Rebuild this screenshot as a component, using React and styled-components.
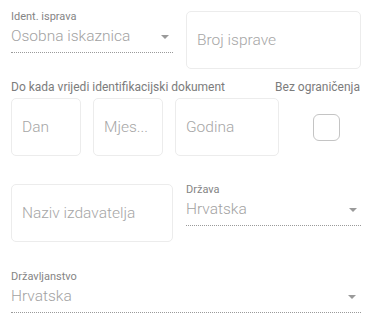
import React from "react";
import styled, { createGlobalStyle } from "styled-components";

const GlobalStyle = createGlobalStyle`
  body {
    margin: 0;
    background: #ffffff;
    font-family: Roboto, "Liberation Sans", sans-serif;
  }
`;

const Form = styled.div`
  width: 371px;
  box-sizing: border-box;
  padding: 11px 10px 0 11px;
`;

const Row = styled.div`
  display: grid;
  grid-template-columns: ${props => props.columns};
  column-gap: ${props => props.gap || "13px"};
  align-items: start;
  margin-top: ${props => props.top || "0"};
`;

const Select = styled.div`
  display: flex;
  flex-direction: column;
  border-bottom: 1px dotted #9a9a9a;
  padding-bottom: 5px;
`;

const Label = styled.span`
  font-size: 11px;
  line-height: 12px;
  color: #858585;
  white-space: nowrap;
`;

const ValueRow = styled.div`
  display: flex;
  align-items: center;
  justify-content: space-between;
  margin-top: 2px;
  font-size: 15.5px;
  line-height: 22px;
  font-weight: 300;
  color: #a2a2a2;
  padding-right: ${props => props.pr || "4px"};
`;

const Caret = styled.span`
  width: 0;
  height: 0;
  margin-top: 2px;
  border-left: 4.5px solid transparent;
  border-right: 4.5px solid transparent;
  border-top: 4px solid #9a9a9a;
`;

const Field = styled.div`
  height: 58px;
  box-sizing: border-box;
  border: 1px solid #ececec;
  border-radius: 5px;
  display: flex;
  align-items: center;
  padding-left: 10px;
  font-size: 15.5px;
  font-weight: 300;
  color: #a6a6a6;
  white-space: nowrap;
  overflow: hidden;
`;

const DateLabels = styled.div`
  display: flex;
  justify-content: space-between;
  margin-top: 11px;
  padding-right: 1px;
`;

const DateLabel = styled.span`
  font-size: 12px;
  line-height: 14px;
  color: #7c7c7c;
  white-space: nowrap;
`;

const CheckCell = styled.div`
  display: flex;
  justify-content: center;
  align-items: center;
  height: 58px;
  padding-left: 1px;
`;

const Checkbox = styled.div`
  width: 27px;
  height: 27px;
  box-sizing: border-box;
  border: 1px solid #c4c4c4;
  border-radius: 6px;
`;

export default function App() {
  return (
    <>
      <GlobalStyle />
      <Form>
        <Row columns="162px 175px">
          <Select>
            <Label>Ident. isprava</Label>
            <ValueRow>
              <span>Osobna iskaznica</span>
              <Caret />
            </ValueRow>
          </Select>
          <Field>Broj isprave</Field>
        </Row>

        <DateLabels>
          <DateLabel>Do kada vrijedi identifikacijski dokument</DateLabel>
          <DateLabel>Bez ograničenja</DateLabel>
        </DateLabels>

        <Row columns="70px 70px 104px 1fr" gap="12px" top="4px">
          <Field>Dan</Field>
          <Field>Mjes...</Field>
          <Field>Godina</Field>
          <CheckCell>
            <Checkbox />
          </CheckCell>
        </Row>

        <Row columns="162px 175px" top="28px">
          <Field>Naziv izdavatelja</Field>
          <Select>
            <Label>Država</Label>
            <ValueRow>
              <span>Hrvatska</span>
              <Caret />
            </ValueRow>
          </Select>
        </Row>

        <Row columns="1fr" top="29px">
          <Select>
            <Label>Državljanstvo</Label>
            <ValueRow pr="5px">
              <span>Hrvatska</span>
              <Caret />
            </ValueRow>
          </Select>
        </Row>
      </Form>
    </>
  );
}
